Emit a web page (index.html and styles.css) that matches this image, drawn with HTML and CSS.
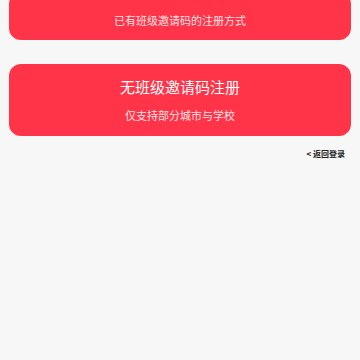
FILE: index.html
```html
<!DOCTYPE html>
<html lang="zh-CN">
<head>
  <meta charset="UTF-8">
  <title>注册</title>
  <link rel="stylesheet" href="styles.css">
</head>
<body>

<div class="page">
  <!-- 有邀请码 (scrolled past its title) -->
  <div class="card card-top">
    <div class="card-desc">已有班级邀请码的注册方式</div>
  </div>

  <!-- 无邀请码 -->
  <div class="card">
    <div class="card-title">无班级邀请码注册</div>
    <div class="card-desc">仅支持部分城市与学校</div>
  </div>

  <div class="back">
    <a href="#">&lt; 返回登录</a>
  </div>
</div>

</body>
</html>
```

FILE: styles.css
```css
body {
  font-family: "Noto Sans CJK SC", "Noto Sans", sans-serif;
  margin: 0;
  background: #f7f7f7;
  height: 360px;
  overflow: hidden;
}
.page {
  margin-top: -8px;
  padding: 0 9px;
  display: flex;
  flex-direction: column;
  gap: 24px;
}
.card {
  background: #ff3449;
  border-radius: 12px;
  padding: 13px 0 13px;
  text-align: center;
  color: #fff;
}
.card-top {
  padding: 20px 0 12px;
}
.card-title {
  font-size: 15px;
  line-height: 20px;
}
.card-desc {
  margin-top: 10px;
  font-size: 11px;
  line-height: 16px;
  color: rgba(255, 255, 255, 0.88);
}
.card-top .card-desc {
  margin-top: 0;
}
.back {
  margin-top: -12px;
  text-align: right;
  padding-right: 6px;
  font-size: 8px;
  line-height: 12px;
}
.back a {
  color: #222;
  font-weight: 600;
  text-decoration: none;
}
```
